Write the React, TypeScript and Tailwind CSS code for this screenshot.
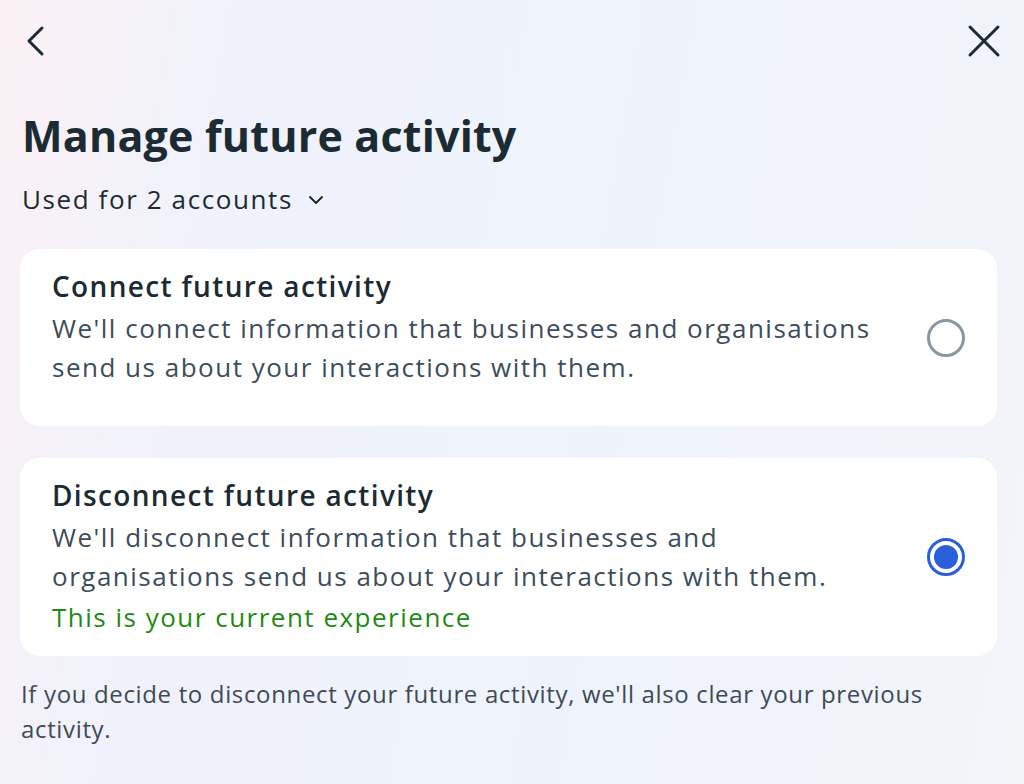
import React from "react";

const font = { fontFamily: "'Open Sans', 'Noto Sans', sans-serif" };

const Radio: React.FC<{ checked?: boolean }> = ({ checked }) =>
  checked ? (
    <div className="w-[38px] h-[38px] rounded-full border-[3px] border-[#2a5fdc] flex items-center justify-center shrink-0">
      <div className="w-[24px] h-[24px] rounded-full bg-[#2a5fdc]" />
    </div>
  ) : (
    <div className="w-[38px] h-[38px] rounded-full border-[3px] border-[#8a96a1] shrink-0" />
  );

interface OptionCardProps {
  title: string;
  body: React.ReactNode;
  note?: string;
  checked?: boolean;
  className?: string;
}

const OptionCard: React.FC<OptionCardProps> = ({ title, body, note, checked, className }) => (
  <div className={"bg-white rounded-[20px] pl-8 pr-8 flex items-center " + (className ?? "")}>
    <div className="flex-1 self-start pt-[19px]">
      <div className="text-[28px] leading-[36px] font-semibold tracking-[1.35px] text-[#1c2b33]">{title}</div>
      <div className="text-[26px] leading-[39px] tracking-[1.5px] text-[#3c4d5c] mt-[5px]">{body}</div>
      {note && <div className="text-[26px] leading-[39px] tracking-[1.5px] text-[#1f8a13] mt-[2px]">{note}</div>}
    </div>
    <Radio checked={checked} />
  </div>
);

export default function App() {
  return (
    <div
      style={font}
      className="w-[1024px] h-[784px] overflow-hidden bg-[linear-gradient(100deg,#fbf1f4_0%,#f1f2fb_18%,#eef3fc_50%,#f1f3fb_85%,#f3f5f9_100%)]"
    >
      <div className="flex justify-between items-center px-[22px] pt-[22px] h-[60px]">
        <svg width="30" height="34" viewBox="0 0 30 34" fill="none">
          <path d="M20 4 L7 17 L20 30" stroke="#1c2b33" strokeWidth="3" strokeLinecap="round" strokeLinejoin="round" />
        </svg>
        <svg width="36" height="36" viewBox="0 0 36 36" fill="none">
          <path d="M4 4 L32 32 M32 4 L4 32" stroke="#1c2b33" strokeWidth="3" strokeLinecap="round" />
        </svg>
      </div>

      <div className="px-[20px]">
        <h1 className="mt-[50px] text-[43px] leading-[52px] font-bold tracking-[0.2px] text-[#1c2b33] pl-[2px]">
          Manage future activity
        </h1>
        <div className="mt-[19px] flex items-center text-[26px] leading-[36px] tracking-[1.6px] text-[#1c2b33] pl-[2px]">
          <span>Used for 2 accounts</span>
          <svg className="ml-[15px] mt-[2px]" width="16" height="10" viewBox="0 0 16 10" fill="none">
            <path d="M2 2 L8 8 L14 2" stroke="#1c2b33" strokeWidth="2" strokeLinecap="round" strokeLinejoin="round" />
          </svg>
        </div>

        <OptionCard
          className="mt-[32px] h-[177px] mr-[7px]"
          title="Connect future activity"
          body={
            <>
              We'll connect information that businesses and organisations
              <br />
              send us about your interactions with them.
            </>
          }
        />

        <OptionCard
          className="mt-[32px] h-[198px] mr-[7px]"
          title="Disconnect future activity"
          checked
          body={
            <>
              We'll disconnect information that businesses and
              <br />
              organisations send us about your interactions with them.
            </>
          }
          note="This is your current experience"
        />

        <p className="mt-[20px] text-[24px] leading-[35px] tracking-[0.65px] text-[#3f4a55] pl-[1px]">
          If you decide to disconnect your future activity, we'll also clear your previous
          <br />
          activity.
        </p>
      </div>
    </div>
  );
}
